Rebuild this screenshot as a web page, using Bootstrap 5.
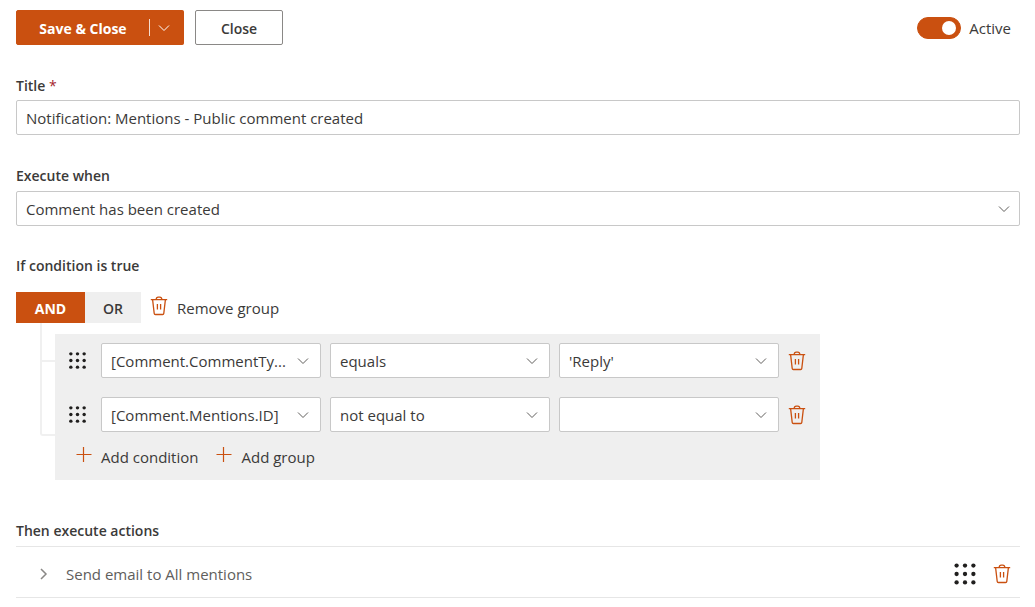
<!DOCTYPE html>
<html lang="en">
<head>
<meta charset="utf-8">
<meta name="viewport" content="width=device-width, initial-scale=1">
<title>Notification: Mentions - Public comment created</title>
<link href="https://cdn.jsdelivr.net/npm/bootstrap@5.3.0/dist/css/bootstrap.min.css" rel="stylesheet">
<style>
  :root { --accent: #ca5010; --ink: #3b3a39; --line: #c8c8c8; --panel: #efefef; }
  body { font-family: "Open Sans", "Noto Sans", sans-serif; font-size: 15px; line-height: 20px; color: var(--ink); background: #fff; }
  .page { padding: 10px 15px 0 16px; }
  .btn { --bs-btn-font-size: 14px; --bs-btn-line-height: 20px; --bs-btn-border-radius: 2px; --bs-btn-color: var(--ink); }
  .btn-accent { --bs-btn-color: #fff; --bs-btn-bg: var(--accent); --bs-btn-border-color: var(--accent); --bs-btn-hover-color: #fff; --bs-btn-hover-bg: #b3450c; --bs-btn-hover-border-color: #b3450c; }
  .toolbar { margin-bottom: 30px; }
  .toolbar .btn { height: 35px; }
  .toolbar .btn-group { margin-right: 11px; }
  .btn-save { width: 134px; padding: 8px 0 5px; font-weight: 700; }
  .btn-more { width: 35px; padding: 0; }
  .btn-more::before { content: ""; width: 1px; height: 17px; background: #fff; opacity: .8; }
  .btn-close-form { width: 88px; padding: 8px 0 5px; border-color: #8a8886; font-weight: 600; }
  .form-switch { padding-right: 9px; }
  .form-switch .form-check-input { width: 44px; height: 22px; margin: 0; }
  .form-switch .form-check-input:checked { background-color: var(--accent); border-color: var(--accent);
    background-image: url("data:image/svg+xml,%3csvg xmlns='http://www.w3.org/2000/svg' viewBox='0 0 20 20'%3e%3ccircle cx='9' cy='10' r='7' fill='%23fff'/%3e%3c/svg%3e"); }
  .caption { display: block; font-size: 14px; line-height: 20px; font-weight: 600; margin: 0 0 5px; padding-top: 1px; }
  .field { margin-bottom: 29px; }
  .field + .field { margin-top: 30px; }
  .required { color: #a4262c; font-weight: 400; }
  .form-control, .form-select { height: 35px; padding: 7px 9px; font-size: 15px; line-height: 19px; color: var(--ink); border-color: var(--line); border-radius: 2px; }
  .form-select { padding: 8px 28px 6px 9px; background-size: 12px 12px; background-position: right 9px center;
    background-image: url("data:image/svg+xml,%3csvg xmlns='http://www.w3.org/2000/svg' viewBox='0 0 12 12'%3e%3cpath d='M1 3.5l5 5 5-5' fill='none' stroke='%23605e5c'/%3e%3c/svg%3e"); }
  .rule .form-select { flex: 1 1 0; min-width: 0; background-position: right 11px center; }
  .btn-logic { height: 31px; padding: 2px 0 0; border: 0; border-radius: 0; font-weight: 600; }
  .btn-logic.on { background: var(--accent); color: #fff; font-weight: 700; width: 69px; }
  .btn-logic.off { background: var(--panel); width: 56px; }
  .btn-flat { border: 0; padding: 0; font-size: 15px; line-height: 20px; display: inline-flex; align-items: center; justify-content: center; }
  .btn-flat svg, .btn-more svg { display: block; flex: none; }
  .accent { color: var(--accent); }
  .branch { margin-left: 24px; width: 15px; flex: none; }
  .branch div { border: solid #f0f0f0; border-width: 0 0 2px 2px; height: 39px; }
  .branch div + div { height: 74px; border-bottom-left-radius: 3px; }
  .rules { background: var(--panel); flex: 0 1 765px; min-width: 0; margin-top: 11px; padding: 9px 14px 13px 13px; }
  .rule { gap: 9px; margin-bottom: 19px; }
  .rule:nth-child(2) { margin-bottom: 15px; }
  .grip { width: 24px; justify-content: flex-start; }
  .adders { gap: 18px; padding-left: 8px; }
  .adders .btn { gap: 9px; }
  .then { margin-top: 40px; }
  .actions { border: solid #e6e6e6; border-width: 1px 0; height: 52px; padding: 4px 9px 0 22px; }
  .muted { color: #605e5c; }
</style>
</head>
<body>
<svg class="d-none" xmlns="http://www.w3.org/2000/svg">
  <symbol id="bin" viewBox="0 0 18 20">
    <g fill="none" stroke="currentColor" stroke-width="1.3">
      <path d="M.8 3.7h16.4M2.6 3.7l1.6 13.7q.1 1.1 1.2 1.1h7.2q1.1 0 1.2-1.1l1.6-13.7M6.1 3.5q.2-2.3 2.1-2.3h1.6q1.9 0 2.1 2.3M7.4 7.9v5.6M10.6 7.9v5.6"/>
    </g>
  </symbol>
  <symbol id="dots" viewBox="0 0 20 20">
    <g fill="#201f1e">
      <circle cx="3" cy="3" r="1.8"/><circle cx="10" cy="3" r="1.8"/><circle cx="17" cy="3" r="1.8"/>
      <circle cx="3" cy="10" r="1.8"/><circle cx="10" cy="10" r="1.8"/><circle cx="17" cy="10" r="1.8"/>
      <circle cx="3" cy="17" r="1.8"/><circle cx="10" cy="17" r="1.8"/><circle cx="17" cy="17" r="1.8"/>
    </g>
  </symbol>
  <symbol id="plus" viewBox="0 0 16 16"><path d="M.5 7.5h15M7.5 0v15" fill="none" stroke="currentColor" stroke-width="1.2"/></symbol>
</svg>

<main class="page">
  <div class="toolbar d-flex align-items-center">
    <div class="btn-group">
      <button type="button" class="btn btn-accent btn-save">Save &amp; Close</button>
      <button type="button" class="btn btn-accent btn-more d-flex align-items-center gap-2 border-start-0" aria-label="More save options">
        <svg width="12" height="12" viewBox="0 0 12 12"><path d="M1 3.5l5 5 5-5" fill="none" stroke="#fff"/></svg>
      </button>
    </div>
    <button type="button" class="btn btn-close-form">Close</button>
    <div class="form-check form-switch d-flex align-items-center gap-2 ms-auto mb-0 ps-0">
      <input class="form-check-input float-none" type="checkbox" role="switch" id="active" checked>
      <label class="form-check-label" for="active">Active</label>
    </div>
  </div>

  <div class="field">
    <label class="caption mb-1" for="title">Title <span class="required">*</span></label>
    <input class="form-control" id="title" type="text" value="Notification: Mentions - Public comment created">
  </div>

  <div class="field">
    <label class="caption" for="event">Execute when</label>
    <select class="form-select" id="event"><option>Comment has been created</option></select>
  </div>

  <section>
    <h2 class="caption mb-3">If condition is true</h2>
    <div class="d-flex align-items-center">
      <button type="button" class="btn btn-logic on">AND</button>
      <button type="button" class="btn btn-logic off">OR</button>
      <button type="button" class="btn btn-flat gap-2 ms-2">
        <svg class="accent mb-1" width="20" height="20"><use href="#bin"/></svg><span>Remove group</span>
      </button>
    </div>
    <div class="d-flex align-items-start">
      <div class="branch"><div></div><div></div></div>
      <div class="rules">
        <div class="rule d-flex align-items-center">
          <button type="button" class="btn btn-flat grip" aria-label="Move condition"><svg width="19" height="19"><use href="#dots"/></svg></button>
          <select class="form-select" aria-label="Field"><option>[Comment.CommentTy...</option></select>
          <select class="form-select" aria-label="Operator"><option>equals</option></select>
          <select class="form-select" aria-label="Value"><option>'Reply'</option></select>
          <button type="button" class="btn btn-flat accent" aria-label="Delete condition"><svg width="18" height="20"><use href="#bin"/></svg></button>
        </div>
        <div class="rule d-flex align-items-center">
          <button type="button" class="btn btn-flat grip" aria-label="Move condition"><svg width="19" height="19"><use href="#dots"/></svg></button>
          <select class="form-select" aria-label="Field"><option>[Comment.Mentions.ID]</option></select>
          <select class="form-select" aria-label="Operator"><option>not equal to</option></select>
          <select class="form-select" aria-label="Value"><option></option></select>
          <button type="button" class="btn btn-flat accent" aria-label="Delete condition"><svg width="18" height="20"><use href="#bin"/></svg></button>
        </div>
        <div class="adders d-flex">
          <button type="button" class="btn btn-flat"><svg class="accent mb-1" width="16" height="16"><use href="#plus"/></svg><span>Add condition</span></button>
          <button type="button" class="btn btn-flat"><svg class="accent mb-1" width="16" height="16"><use href="#plus"/></svg><span>Add group</span></button>
        </div>
      </div>
    </div>
  </section>

  <section class="then">
    <h2 class="caption">Then execute actions</h2>
    <div class="actions d-flex align-items-center">
      <button type="button" class="btn btn-flat muted gap-3">
        <svg width="12" height="14" viewBox="0 0 12 14"><path d="M3 2l5 5-5 5" fill="none" stroke="#8a8886" stroke-width="1.5"/></svg>Send email to All mentions
      </button>
      <button type="button" class="btn btn-flat ms-auto me-3" aria-label="Move action"><svg width="24" height="24"><use href="#dots"/></svg></button>
      <button type="button" class="btn btn-flat accent" aria-label="Delete action"><svg width="18" height="20"><use href="#bin"/></svg></button>
    </div>
  </section>
</main>
<script src="https://cdn.jsdelivr.net/npm/bootstrap@5.3.0/dist/js/bootstrap.bundle.min.js"></script>
</body>
</html>
